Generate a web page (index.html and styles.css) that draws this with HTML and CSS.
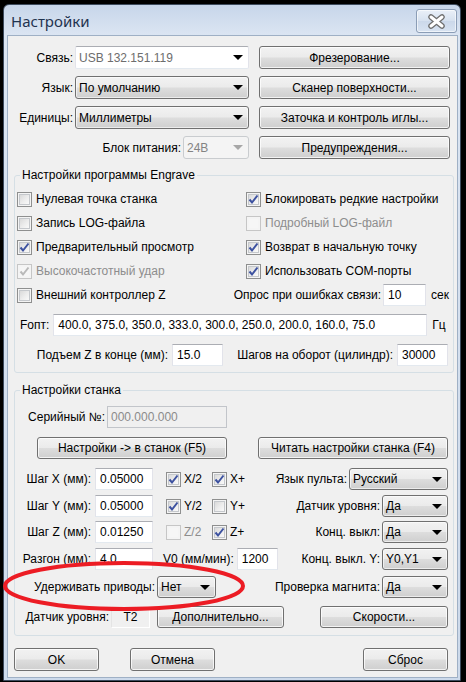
FILE: index.html
```html
<!DOCTYPE html>
<html>
<head>
<meta charset="utf-8">
<link rel="stylesheet" href="styles.css">
</head>
<body>
<div class="window">
  <div class="titlebar">
    <span class="title">Настройки</span>
    <span class="close">
      <svg width="19" height="15" viewBox="0 0 19 15">
        <path d="M4 3 L15 12 M15 3 L4 12" stroke="#6e6e6e" stroke-width="5.5" stroke-linecap="round" fill="none"/>
        <path d="M4 3 L15 12 M15 3 L4 12" stroke="#ffffff" stroke-width="3" stroke-linecap="round" fill="none"/>
      </svg>
    </span>
  </div>
  <div class="client">
    <div class="top">
      <div class="topleft">
        <div class="trow"><span>Связь:</span><div class="combo edit w-main"><span class="ctext">USB 132.151.119</span><span class="arrow"></span></div></div>
        <div class="trow"><span>Язык:</span><div class="combo w-main"><span>По умолчанию</span><span class="arrow"></span></div></div>
        <div class="trow"><span>Единицы:</span><div class="combo w-main"><span>Миллиметры</span><span class="arrow"></span></div></div>
        <div class="trow"><span>Блок питания:</span><div class="combo disabled w-pwr"><span>24В</span><span class="arrow"></span></div></div>
      </div>
      <div class="topright">
        <div class="btn">Фрезерование...</div>
        <div class="btn">Сканер поверхности...</div>
        <div class="btn">Заточка и контроль иглы...</div>
        <div class="btn">Предупреждения...</div>
      </div>
    </div>

    <fieldset class="group g1">
      <legend>Настройки программы Engrave</legend>
      <div class="cbgrid">
        <div class="cb"><span class="box"></span><span>Нулевая точка станка</span></div>
        <div class="cb"><span class="box"><svg width="13" height="13" viewBox="0 0 13 13"><path d="M2.5 6.5 L5 9.5 L10.5 2.5" class="tick"/></svg></span><span>Блокировать редкие настройки</span></div>
        <div class="cb"><span class="box"></span><span>Запись LOG-файла</span></div>
        <div class="cb dis"><span class="box"></span><span>Подробный LOG-файл</span></div>
        <div class="cb"><span class="box"><svg width="13" height="13" viewBox="0 0 13 13"><path d="M2.5 6.5 L5 9.5 L10.5 2.5" class="tick"/></svg></span><span>Предварительный просмотр</span></div>
        <div class="cb"><span class="box"><svg width="13" height="13" viewBox="0 0 13 13"><path d="M2.5 6.5 L5 9.5 L10.5 2.5" class="tick"/></svg></span><span>Возврат в начальную точку</span></div>
        <div class="cb dis"><span class="box"><svg width="13" height="13" viewBox="0 0 13 13"><path d="M2.5 6.5 L5 9.5 L10.5 2.5" class="tick"/></svg></span><span>Высокочастотный удар</span></div>
        <div class="cb"><span class="box"><svg width="13" height="13" viewBox="0 0 13 13"><path d="M2.5 6.5 L5 9.5 L10.5 2.5" class="tick"/></svg></span><span>Использовать COM-порты</span></div>
      </div>
      <div class="r5">
        <div class="cb grow"><span class="box"></span><span>Внешний контроллер Z</span></div>
        <span>Опрос при ошибках связи:</span>
        <div class="input w-opr">10</div>
        <span class="unit">сек</span>
      </div>
      <div class="rf">
        <span class="flabel">Fопт:</span>
        <div class="input w-fopt">400.0, 375.0, 350.0, 333.0, 300.0, 250.0, 200.0, 160.0, 75.0</div>
        <span class="unit">Гц</span>
      </div>
      <div class="rp">
        <span class="lbl w-l1">Подъем Z в конце (мм):</span>
        <div class="input w-51 ml4">15.0</div>
        <span class="lbl w-l2">Шагов на оборот (цилиндр):</span>
        <div class="input w-51 ml4">30000</div>
      </div>
    </fieldset>

    <fieldset class="group g2">
      <legend>Настройки станка</legend>
      <div class="row h22">
        <span class="lbl w-ser">Серийный №:</span>
        <div class="input disabled w-serin">000.000.000</div>
      </div>
      <div class="row h22 mt9">
        <div class="btn w190 ml20">Настройки -&gt; в станок (F5)</div>
        <div class="btn w190 auto">Читать настройки станка (F4)</div>
      </div>
      <div class="row h22 mt9">
        <span class="lbl w-step">Шаг X (мм):</span>
        <div class="input w-58 ml4">0.05000</div>
        <div class="cb sm first"><span class="box"><svg width="13" height="13" viewBox="0 0 13 13"><path d="M2.5 6.5 L5 9.5 L10.5 2.5" class="tick"/></svg></span><span>X/2</span></div>
        <div class="cb sm"><span class="box"><svg width="13" height="13" viewBox="0 0 13 13"><path d="M2.5 6.5 L5 9.5 L10.5 2.5" class="tick"/></svg></span><span>X+</span></div>
        <div class="rgroup"><span>Язык пульта:</span><div class="combo w-99"><span>Русский</span><span class="arrow"></span></div></div>
      </div>
      <div class="row h22 mt5">
        <span class="lbl w-step">Шаг Y (мм):</span>
        <div class="input w-58 ml4">0.05000</div>
        <div class="cb sm first"><span class="box"><svg width="13" height="13" viewBox="0 0 13 13"><path d="M2.5 6.5 L5 9.5 L10.5 2.5" class="tick"/></svg></span><span>Y/2</span></div>
        <div class="cb sm"><span class="box"></span><span>Y+</span></div>
        <div class="rgroup"><span>Датчик уровня:</span><div class="combo w-66"><span>Да</span><span class="arrow"></span></div></div>
      </div>
      <div class="row h22 mt4">
        <span class="lbl w-step">Шаг Z (мм):</span>
        <div class="input w-58 ml4">0.01250</div>
        <div class="cb sm first dis"><span class="box"></span><span>Z/2</span></div>
        <div class="cb sm"><span class="box"><svg width="13" height="13" viewBox="0 0 13 13"><path d="M2.5 6.5 L5 9.5 L10.5 2.5" class="tick"/></svg></span><span>Z+</span></div>
        <div class="rgroup"><span>Конц. выкл:</span><div class="combo w-66"><span>Да</span><span class="arrow"></span></div></div>
      </div>
      <div class="row h22 mt5">
        <span class="lbl w-step">Разгон (мм):</span>
        <div class="input w-58 ml4">4.0</div>
        <span class="v0">V0 (мм/мин):</span>
        <div class="input w-41 ml3">1200</div>
        <div class="rgroup"><span>Конц. выкл. Y:</span><div class="combo w-66"><span>Y0,Y1</span><span class="arrow"></span></div></div>
      </div>
      <div class="row h22 mt6">
        <span class="lbl w-hold">Удерживать приводы:</span>
        <div class="combo w-59 ml2"><span>Нет</span><span class="arrow"></span></div>
        <div class="rgroup"><span>Проверка магнита:</span><div class="combo w-66"><span>Да</span><span class="arrow"></span></div></div>
      </div>
      <div class="row h22 mt8">
        <span class="lbl w-sens">Датчик уровня:</span>
        <div class="static">T2</div>
        <div class="btn w127 ml7">Дополнительно...</div>
        <div class="btn w128 auto">Скорости...</div>
      </div>
    </fieldset>

    <div class="bottom">
      <div class="btn w85 h23">OK</div>
      <div class="btn w85 h23 ml31">Отмена</div>
      <div class="btn w85 h23 auto mr6">Сброс</div>
    </div>
  </div>
</div>
<svg class="annot" width="466" height="682" viewBox="0 0 466 682">
  <ellipse cx="124" cy="586" rx="119" ry="23" fill="none" stroke="#ec1c24" stroke-width="4"/>
</svg>
</body>
</html>
```

FILE: styles.css
```css
html, body {
  margin: 0;
  padding: 0;
}
body {
  position: relative;
  width: 466px;
  height: 682px;
  overflow: hidden;
  background: #000;
  font-family: "Liberation Sans", Arial, sans-serif;
  font-size: 12px;
  color: #000;
}
.window {
  box-sizing: border-box;
  margin: 4px 0 0 3px;
  width: 458px;
  height: 677px;
  border: 1px solid #3d4b5e;
  border-radius: 6px 6px 0 0;
  background: linear-gradient(#c7d6ea, #dbe5f2 30px, #cddaeb);
  padding: 0 2px 2px 3px;
  display: flex;
  flex-direction: column;
}
.titlebar {
  height: 30px;
  display: flex;
  align-items: flex-start;
  flex: none;
}
.title {
  font-family: "Noto Sans", "Open Sans", sans-serif;
  font-size: 15px;
  line-height: 20px;
  margin: 6px 0 0 4px;
  color: #1f334f;
}
.close {
  box-sizing: border-box;
  margin: 4px 1px 0 auto;
  width: 41px;
  height: 24px;
  border: 1px solid #8b9db6;
  border-radius: 3px;
  background: linear-gradient(#eaf0f8, #d6e1ef 50%, #cbd8ea 51%, #d8e3f1);
  box-shadow: inset 0 0 0 1px rgba(255,255,255,0.6);
  display: flex;
  align-items: center;
  justify-content: center;
}
.client {
  flex: 1;
  border: 1px solid #9fb0c5;
  background: #f0f0f0;
  padding: 10px 3px 0 6px;
}
.top {
  display: flex;
}
.topleft {
  width: 235px;
  display: flex;
  flex-direction: column;
  gap: 7px;
}
.trow {
  height: 23px;
  display: flex;
  justify-content: flex-end;
  align-items: center;
  gap: 2px;
}
.topright {
  margin-left: 10px;
  width: 191px;
  display: flex;
  flex-direction: column;
  gap: 7px;
}
.topright .btn {
  height: 23px;
}
.btn {
  box-sizing: border-box;
  display: flex;
  align-items: center;
  justify-content: center;
  height: 22px;
  border: 1px solid #707070;
  border-radius: 3px;
  background: linear-gradient(#f2f2f2 0%, #ebebeb 48%, #dddddd 52%, #cfcfcf 100%);
  box-shadow: inset 0 0 0 1px rgba(255,255,255,0.75);
  white-space: nowrap;
}
.combo {
  box-sizing: border-box;
  display: flex;
  align-items: center;
  justify-content: space-between;
  height: 23px;
  padding: 0 5px 0 3px;
  border: 1px solid #707070;
  border-radius: 3px;
  background: linear-gradient(#f2f2f2 0%, #ebebeb 48%, #dddddd 52%, #cfcfcf 100%);
  box-shadow: inset 0 0 0 1px rgba(255,255,255,0.6);
  white-space: nowrap;
}
.combo.edit {
  background: #fff;
  border-color: #abadb3 #e2e3ea #e3e9ef #e2e3ea;
  border-radius: 2px;
  box-shadow: none;
}
.combo.edit .ctext {
  color: #6d6d6d;
}
.combo.disabled {
  background: #f4f4f4;
  border-color: #c9cccf;
  box-shadow: none;
  color: #838383;
}
.arrow {
  width: 0;
  height: 0;
  border-left: 5px solid transparent;
  border-right: 5px solid transparent;
  border-top: 5px solid #000;
}
.combo.disabled .arrow {
  border-top-color: #a7a7a7;
}
.w-main { width: 174px; }
.w-pwr { width: 66px; }
.w-99 { width: 99px; }
.w-66 { width: 66px; }
.w-59 { width: 59px; }
.g2 .combo { height: 22px; }

.group {
  margin: 9px 0 0 0;
  border: 1px solid #d5dfe5;
  border-radius: 3px;
  min-width: 0;
}
.group legend {
  padding: 0 2px;
  margin-left: 3px;
  line-height: 14px;
}
.g1 {
  padding: 5px 4px 6px 2px;
}
.g2 {
  margin-top: 10px;
  padding: 9px 5px 7px 2px;
}
.cbgrid {
  display: grid;
  grid-template-columns: 229px 1fr;
  grid-auto-rows: 24px;
}
.cb {
  display: flex;
  align-items: center;
  gap: 4px;
  white-space: nowrap;
}
.box {
  box-sizing: border-box;
  width: 15px;
  height: 15px;
  border: 1px solid #8e8f8f;
  background: linear-gradient(135deg, #d2d2d2 0%, #eeeeee 55%, #ffffff 100%);
  box-shadow: inset 0 0 0 1px #f4f4f4, inset 0 0 0 2px #c5c8cc;
  display: flex;
  align-items: center;
  justify-content: center;
  flex: none;
}
.tick {
  fill: none;
  stroke: #3d52a0;
  stroke-width: 2;
  stroke-linejoin: miter;
}
.cb.dis {
  color: #8d8d8d;
}
.cb.dis .box {
  border-color: #c6c6c6;
  background: #f6f6f6;
  box-shadow: inset 0 0 0 2px #f4f4f4;
}
.cb.dis .tick {
  stroke: #b9b9b9;
}
.r5 {
  height: 24px;
  display: flex;
  align-items: center;
}
.grow {
  flex: 1;
}
.input {
  box-sizing: border-box;
  height: 22px;
  background: #fff;
  border: 1px solid;
  border-color: #abadb3 #e2e3ea #e3e9ef #e2e3ea;
  padding: 0 4px;
  display: flex;
  align-items: center;
  white-space: nowrap;
  overflow: hidden;
}
.input.disabled {
  background: #f0f0f0;
  border-color: #c2c5ca;
  color: #8b8b8b;
  padding-left: 3px;
}
.w-opr { width: 43px; margin-left: 2px; }
.unit { margin-left: 5px; }
.rf {
  margin-top: 7px;
  height: 22px;
  display: flex;
  align-items: center;
}
.flabel { margin-left: 3px; }
.w-fopt { width: 374px; margin-left: 4px; }
.rp {
  margin-top: 8px;
  height: 22px;
  display: flex;
  align-items: center;
}
.lbl {
  text-align: right;
  white-space: nowrap;
  flex: none;
}
.w-l1 { width: 151px; }
.w-l2 { width: 170px; }
.w-51 { width: 51px; }
.w-58 { width: 58px; }
.w-41 { width: 41px; }
.ml2 { margin-left: 2px; }
.ml3 { margin-left: 3px; }
.ml4 { margin-left: 4px; }
.ml7 { margin-left: 7px; }
.ml20 { margin-left: 20px; }
.ml31 { margin-left: 31px; }
.mr6 { margin-right: 6px; }
.auto { margin-left: auto; }
.row {
  display: flex;
  align-items: center;
}
.h22 { height: 22px; }
.h23 { height: 23px; }
.mt4 { margin-top: 4px; }
.mt5 { margin-top: 5px; }
.mt6 { margin-top: 6px; }
.mt8 { margin-top: 8px; }
.mt9 { margin-top: 9px; }
.w-ser { width: 88px; }
.w-serin { width: 120px; margin-left: 2px; }
.w190 { width: 190px; }
.w127 { width: 127px; }
.w128 { width: 128px; }
.w85 { width: 85px; }
.w-step { width: 74px; }
.w-hold { width: 138px; }
.w-sens { width: 92px; }
.cb.sm {
  width: 46px;
  gap: 3px;
}
.cb.sm.first {
  margin-left: 13px;
}
.rgroup {
  margin-left: auto;
  display: flex;
  align-items: center;
  gap: 2px;
}
.v0 {
  margin-left: 10px;
}
.static {
  box-sizing: border-box;
  width: 39px;
  height: 21px;
  margin-left: 2px;
  border: 1px solid;
  border-color: #e4e4e4 #ffffff #ffffff #e4e4e4;
  display: flex;
  align-items: center;
  justify-content: center;
}
.bottom {
  margin-top: 12px;
  display: flex;
}
.annot {
  position: absolute;
  left: 0;
  top: 0;
  pointer-events: none;
}
```
